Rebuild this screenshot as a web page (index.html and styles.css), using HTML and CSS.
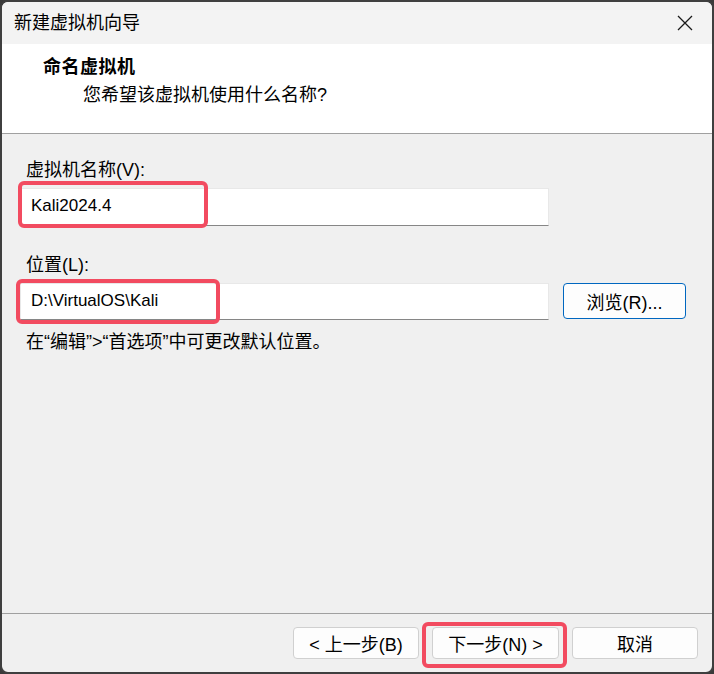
FILE: index.html
```html
<!DOCTYPE html>
<html lang="zh-CN">
<head>
    <meta charset="UTF-8">
    <meta name="viewport" content="width=device-width, initial-scale=1.0">
    <title>新建虚拟机向导</title>
    <link rel="stylesheet" href="styles.css">
</head>
<body>
    <div class="window">
        <div class="titlebar">
            <span class="title">新建虚拟机向导</span>
            <button class="close-button" aria-label="关闭">
                <svg width="16" height="16" viewBox="0 0 16 16">
                    <path d="M1 1 L15 15 M15 1 L1 15" stroke="#1a1a1a" stroke-width="1.3" fill="none"/>
                </svg>
            </button>
        </div>

        <div class="header">
            <div class="header-title">命名虚拟机</div>
            <div class="header-subtitle">您希望该虚拟机使用什么名称?</div>
        </div>

        <div class="content">
            <label class="field-label" for="vm-name">虚拟机名称(V):</label>
            <div class="field-row">
                <div class="field">
                    <input type="text" id="vm-name" class="text-input" value="Kali2024.4">
                    <div class="mark mark-name"></div>
                </div>
            </div>

            <label class="field-label second" for="vm-location">位置(L):</label>
            <div class="field-row">
                <div class="field">
                    <input type="text" id="vm-location" class="text-input short" value="D:\VirtualOS\Kali">
                    <div class="mark mark-location"></div>
                </div>
                <button class="browse-button">浏览(R)...</button>
            </div>

            <p class="hint">在“编辑”&gt;“首选项”中可更改默认位置。</p>
        </div>

        <div class="footer">
            <button class="wizard-button back">&lt; 上一步(B)</button>
            <div class="next-wrap">
                <button class="wizard-button next">下一步(N) &gt;</button>
                <div class="mark mark-next"></div>
            </div>
            <button class="wizard-button">取消</button>
        </div>
    </div>
</body>
</html>
```

FILE: styles.css
```css
body {
    margin: 0;
    background-color: #3a3a3a;
    font-family: "Liberation Sans", "Noto Sans CJK SC", sans-serif;
    font-size: 18px;
    color: #000;
}

.window {
    width: 714px;
    height: 674px;
    box-sizing: border-box;
    border: 2px solid #3f3f3f;
    border-radius: 8px;
    overflow: hidden;
    background-color: #f0f0f0;
    display: flex;
    flex-direction: column;
}

.titlebar {
    height: 42px;
    flex-shrink: 0;
    background-color: #f3f3f3;
    display: flex;
    align-items: center;
    justify-content: space-between;
    padding-left: 12px;
}

.title {
    line-height: 24px;
}

.close-button {
    width: 46px;
    height: 42px;
    margin-right: 4px;
    border: none;
    background: none;
    padding: 0;
    display: flex;
    align-items: center;
    justify-content: center;
}

.header {
    height: 89px;
    flex-shrink: 0;
    box-sizing: content-box;
    background-color: #fff;
    border-bottom: 1px solid #a0a0a0;
    padding-left: 41px;
}

.header-title {
    margin-top: 11px;
    line-height: 24px;
    font-weight: bold;
    letter-spacing: 0.5px;
}

.header-subtitle {
    margin-top: 4px;
    margin-left: 40px;
    line-height: 24px;
}

.content {
    flex: 1;
    padding: 24px 0 0 18px;
}

.field-label {
    display: block;
    margin-left: 6px;
    line-height: 24px;
}

.field-label.second {
    margin-top: 27px;
}

.field-row {
    display: flex;
    align-items: flex-start;
    gap: 14px;
    margin-top: 6px;
}

.field {
    position: relative;
}

.text-input {
    display: block;
    width: 529px;
    height: 38px;
    box-sizing: border-box;
    margin: 0;
    padding: 0 10px 2px;
    border: 1px solid #e8e8e8;
    border-bottom-color: #868686;
    border-radius: 0;
    background-color: #fff;
    font-family: inherit;
    font-size: 17px;
    color: #000;
}

.text-input.short {
    height: 37px;
}

.browse-button {
    width: 123px;
    height: 36px;
    border: 1px solid #0067c0;
    border-radius: 4px;
    background-color: #fdfdfd;
    font-family: inherit;
    font-size: 18px;
    color: #000;
    padding: 0;
}

.hint {
    margin: 10px 0 0 6px;
    line-height: 24px;
}

.mark {
    position: absolute;
    border: 4px solid #f24b60;
    border-radius: 6px;
    box-sizing: border-box;
    pointer-events: none;
}

.mark-name {
    left: -2px;
    top: -7px;
    width: 190px;
    height: 47px;
}

.mark-location {
    left: -4px;
    top: -4px;
    width: 204px;
    height: 45px;
}

.footer {
    height: 59px;
    flex-shrink: 0;
    box-sizing: border-box;
    border-top: 1px solid #a0a0a0;
    display: flex;
    align-items: flex-start;
    justify-content: flex-end;
    gap: 13px;
    padding: 13px 14px 0 0;
}

.next-wrap {
    position: relative;
}

.wizard-button {
    display: block;
    width: 126px;
    height: 32px;
    border: 1px solid #d0d0d0;
    border-radius: 4px;
    background-color: #fdfdfd;
    font-family: inherit;
    font-size: 18px;
    color: #000;
    padding: 0;
}

.wizard-button.next {
    width: 127px;
}

.mark-next {
    left: -10px;
    top: -5px;
    width: 145px;
    height: 46px;
}
```
